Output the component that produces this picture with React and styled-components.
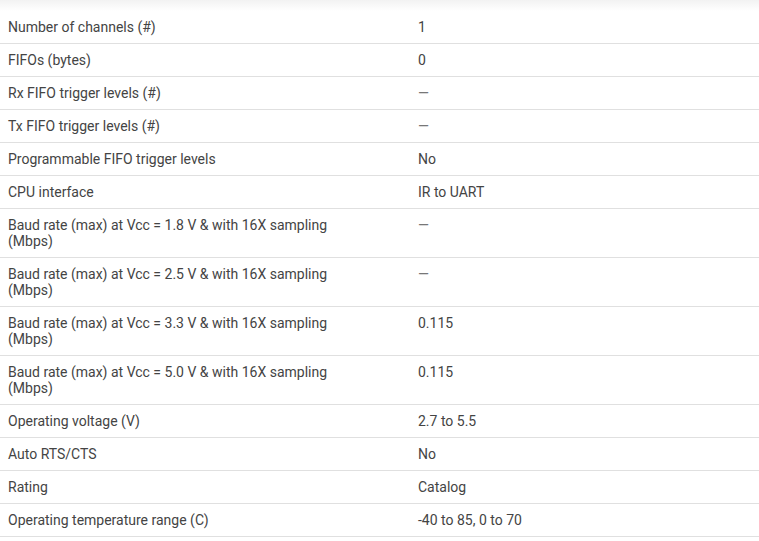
import React from "react";
import styled, { createGlobalStyle } from "styled-components";

const GlobalStyle = createGlobalStyle`
  body {
    margin: 0;
    background: #fff;
    font-family: Roboto, "Liberation Sans", sans-serif;
  }
`;

const rows = [
  ["Number of channels (#)", "1"],
  ["FIFOs (bytes)", "0"],
  ["Rx FIFO trigger levels (#)", "—"],
  ["Tx FIFO trigger levels (#)", "—"],
  ["Programmable FIFO trigger levels", "No"],
  ["CPU interface", "IR to UART"],
  ["Baud rate (max) at Vcc = 1.8 V & with 16X sampling (Mbps)", "—"],
  ["Baud rate (max) at Vcc = 2.5 V & with 16X sampling (Mbps)", "—"],
  ["Baud rate (max) at Vcc = 3.3 V & with 16X sampling (Mbps)", "0.115"],
  ["Baud rate (max) at Vcc = 5.0 V & with 16X sampling (Mbps)", "0.115"],
  ["Operating voltage (V)", "2.7 to 5.5"],
  ["Auto RTS/CTS", "No"],
  ["Rating", "Catalog"],
  ["Operating temperature range (C)", "-40 to 85, 0 to 70"],
];

const App = () => {
  return (
    <Wrapper>
      <GlobalStyle />
      <Shade />
      <SpecTable>
        <tbody>
          {rows.map(([name, value]) => (
            <Row key={name}>
              <Name>{name}</Name>
              <Value $dash={value === "—"}>{value}</Value>
            </Row>
          ))}
        </tbody>
      </SpecTable>
    </Wrapper>
  );
};

const Wrapper = styled.div`
  width: 759px;
`;

const Shade = styled.div`
  height: 11px;
  background: linear-gradient(#f2f2f2, #ffffff);
`;

const SpecTable = styled.table`
  width: 100%;
  border-collapse: collapse;
  font-size: 14px;
  line-height: 16px;
  color: #444;
`;

const Row = styled.tr`
  border-bottom: 1px solid #e0e0e0;
`;

const Name = styled.td`
  width: 336px;
  padding: 8px 66px 8px 8px;
  vertical-align: top;
`;

const Value = styled.td`
  padding: 8px 8px;
  vertical-align: top;
  color: ${(p) => (p.$dash ? "#777" : "#444")};
`;

export default App;
